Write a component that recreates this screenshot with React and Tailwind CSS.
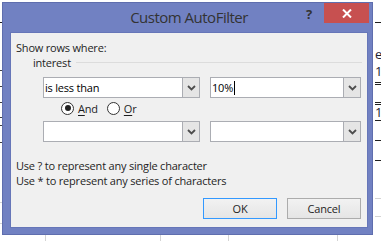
import React from "react";

const Chevron = () => (
  <svg width="9" height="6" viewBox="0 0 9 6" className="block">
    <path d="M1 1 L4.5 4.5 L8 1" fill="none" stroke="#4d4d4d" strokeWidth="1.8" />
  </svg>
);

const Combo = ({ value, width, caret }) => (
  <div className={`flex h-[21px] ${width} border border-[#abadb3] bg-white`}>
    <div className="flex-1 flex items-center pl-[1px] text-[11px] text-black">
      {value}
      {caret && <span className="inline-block w-px h-[14px] bg-black ml-[1px]" />}
    </div>
    <div className="w-[17px] flex items-center justify-center bg-[#e5e5e5] border-l border-[#abadb3]">
      <Chevron />
    </div>
  </div>
);

const Radio = ({ checked, label, mnemonic }) => (
  <label className="flex items-center gap-[4px]">
    <span className="w-[13px] h-[13px] rounded-full border border-[#333] bg-white flex items-center justify-center">
      {checked && <span className="w-[6px] h-[6px] rounded-full bg-[#222]" />}
    </span>
    <span>
      <span className="underline underline-offset-2">{mnemonic}</span>
      {label}
    </span>
  </label>
);

// worksheet peeking out around the dialog
const Worksheet = () => (
  <div className="flex h-full">
    {/* left column sliver */}
    <div className="w-[2px] flex flex-col">
      <div className="h-[23px] border-b border-[#202020]" />
      <div className="h-[48px] border-b border-[#404040]" />
      <div className="h-[16px] border-b border-[#404040]" />
      <div className="h-[16px] border-b border-[#404040]" />
      <div className="h-[15px] border-b border-[#404040]" />
      <div className="h-[8px] border-b border-[#404040]" />
      <div className="h-[17px] border-b border-[#404040]" />
      <div className="h-[60px] border-b border-[#d4d4d4]" />
      <div className="h-[21px] border-b border-[#d4d4d4]" />
    </div>

    {/* middle, under the dialog */}
    <div className="flex-1 flex flex-col">
      <div className="h-[23px] border-b border-[#202020]" />
      <div className="flex-1" />
      <div className="h-[7px] flex">
        <div className="w-[44px] border-r border-[#d4d4d4]" />
        <div className="w-[115px] border-r border-[#d4d4d4]" />
        <div className="w-[68px] border-r border-[#d4d4d4]" />
        <div className="w-[109px] border-r border-[#d4d4d4]" />
      </div>
    </div>

    {/* right column sliver */}
    <div className="w-[8px] flex flex-col pl-[2px] text-[13px] leading-[15px] text-[#223]">
      <div className="h-[23px] border-b border-[#202020]" />
      <div className="h-[24px]" />
      <div className="h-[16px]">e</div>
      <div className="h-[17px] pt-[1px]">1</div>
      <div className="h-[3px] border-b border-[#202020]" />
      <div className="h-[2px] border-b border-[#202020]" />
      <div className="h-[18px] border-b border-[#202020]" />
      <div className="h-[2px] border-b border-[#202020]" />
      <div className="h-[16px] border-b border-[#202020]">1</div>
      <div className="h-[20px] border-b border-[#202020]" />
      <div className="h-[20px] border-b border-[#202020]" />
      <div className="h-[38px] border-b border-[#d4d4d4]" />
      <div className="h-[18px] border-b border-[#d4d4d4]" />
    </div>
  </div>
);

export default function App() {
  return (
    <div
      className="relative w-[381px] h-[241px] bg-white overflow-hidden text-[#1e1e1e]"
      style={{ fontFamily: '"Open Sans", "Noto Sans", sans-serif' }}
    >
      <Worksheet />

      {/* dialog window */}
      <div className="absolute left-[2px] top-[2px] w-[371px] h-[233px] bg-[#7181c2] border border-[#5f6eae] flex flex-col">
        <div className="h-[29px] shrink-0 flex items-start">
          <div className="flex-1 h-full flex items-center justify-center pl-[69px]">
            <span className="text-[15px] text-[#333] tracking-[-0.5px] pb-[1px]">
              Custom AutoFilter
            </span>
          </div>
          <span className="w-[18px] pt-[2px] text-[13px] leading-[18px] font-bold text-[#333]">?</span>
          <div className="w-[45px] h-[20px] mr-[3px] bg-[#c75050] flex items-center justify-center">
            <svg width="10" height="9" viewBox="0 0 10 9">
              <path d="M1 0.5 L9 8.5 M9 0.5 L1 8.5" stroke="#fff" strokeWidth="2" />
            </svg>
          </div>
        </div>

        <div className="flex-1 ml-[7px] mr-[4px] mb-[6px] bg-[#f0f0f0] border border-[#6676b8] text-[11px] leading-[15px] tracking-[-0.2px] flex flex-col">
          <div className="pt-[7px] pl-[5px]">Show rows where:</div>
          <div className="flex items-center pl-[22px] pr-[5px]">
            <span>interest</span>
            <div className="flex-1 h-px bg-[#dcdcdc] ml-[5px]" />
          </div>

          <div className="flex gap-[10px] pl-[32px] mt-[7px]">
            <Combo value="is less than" width="w-[157px]" />
            <Combo value="10%" width="w-[151px]" caret />
          </div>

          <div className="flex items-center gap-[9px] pl-[50px] h-[20px]">
            <Radio checked mnemonic="A" label="nd" />
            <Radio mnemonic="O" label="r" />
          </div>

          <div className="flex gap-[10px] pl-[32px] mt-[3px]">
            <Combo value="" width="w-[157px]" />
            <Combo value="" width="w-[151px]" />
          </div>

          <div className="pl-[5px] mt-[16px]">
            <div>Use ? to represent any single character</div>
            <div>Use * to represent any series of characters</div>
          </div>

          <div className="flex justify-end gap-[10px] pr-[6px] mt-[10px]">
            <button className="w-[74px] h-[21px] border border-[#3399ff] bg-gradient-to-b from-[#f2f2f2] to-[#e5e5e5] text-[11px] text-[#1e1e1e]">
              OK
            </button>
            <button className="w-[74px] h-[21px] border border-[#acacac] bg-gradient-to-b from-[#f2f2f2] to-[#e5e5e5] text-[11px] text-[#1e1e1e]">
              Cancel
            </button>
          </div>
        </div>
      </div>
    </div>
  );
}
